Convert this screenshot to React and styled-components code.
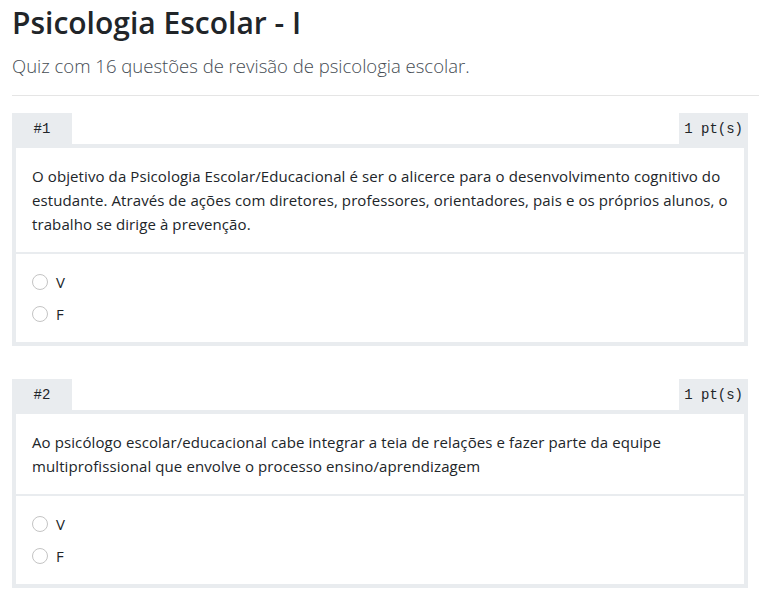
import React from "react";
import styled, { createGlobalStyle } from "styled-components";

const Global = createGlobalStyle`
  html, body { margin: 0; padding: 0; background: #fff; }
  body {
    font-family: "Open Sans", "Noto Sans", sans-serif;
    color: #212529;
  }
  * { box-sizing: border-box; }
`;

const Page = styled.div`
  padding: 0 11px 0 12px;
`;

const Title = styled.h1`
  margin: 0;
  padding-top: 3px;
  font-size: 30px;
  font-weight: 600;
  line-height: 40px;
  color: #212529;
`;

const Lead = styled.p`
  margin: 8px 0 0;
  font-size: 18.5px;
  font-weight: 300;
  line-height: 30px;
  color: #454c53;
`;

const Rule = styled.hr`
  margin: 14px -11px 17px 0;
  border: 0;
  border-top: 1px solid #e5e5e5;
`;

const Card = styled.section`
  margin-bottom: 33px;
`;

const TabRow = styled.div`
  display: flex;
  justify-content: space-between;
  align-items: flex-end;
`;

const Tab = styled.div`
  height: 31px;
  min-width: ${(p) => p.$min || 0}px;
  padding: 0 5px;
  display: flex;
  align-items: center;
  justify-content: center;
  background: #e9ecef;
  font-family: "Liberation Mono", "DejaVu Sans Mono", monospace;
  font-size: 14px;
  color: #212529;
`;

const Body = styled.div`
  border: 4px solid #e9ecef;
  background: #fff;
`;

const Question = styled.p`
  margin: 0;
  padding: 16px;
  font-size: 15px;
  letter-spacing: 0.1px;
  line-height: 24px;
  border-bottom: 2px solid #e9ecef;
`;

const Options = styled.div`
  padding: 16px;
  display: flex;
  flex-direction: column;
  gap: 8px;
`;

const Option = styled.label`
  display: flex;
  align-items: center;
  gap: 8px;
  font-size: 15px;
  line-height: 24px;
`;

const Radio = styled.span`
  width: 16px;
  height: 16px;
  border-radius: 50%;
  border: 1.5px solid #c4c4c4;
  background: #fff;
  flex: none;
`;

const questions = [
  {
    n: 1,
    text: "O objetivo da Psicologia Escolar/Educacional é ser o alicerce para o desenvolvimento cognitivo do estudante. Através de ações com diretores, professores, orientadores, pais e os próprios alunos, o trabalho se dirige à prevenção.",
  },
  {
    n: 2,
    text: "Ao psicólogo escolar/educacional cabe integrar a teia de relações e fazer parte da equipe multiprofissional que envolve o processo ensino/aprendizagem",
  },
];

export default function App() {
  return (
    <Page>
      <Global />
      <Title>Psicologia Escolar - I</Title>
      <Lead>Quiz com 16 questões de revisão de psicologia escolar.</Lead>
      <Rule />
      {questions.map((q) => (
        <Card key={q.n}>
          <TabRow>
            <Tab $min={60}>#{q.n}</Tab>
            <Tab>1 pt(s)</Tab>
          </TabRow>
          <Body>
            <Question>{q.text}</Question>
            <Options>
              <Option>
                <Radio />V
              </Option>
              <Option>
                <Radio />F
              </Option>
            </Options>
          </Body>
        </Card>
      ))}
    </Page>
  );
}
